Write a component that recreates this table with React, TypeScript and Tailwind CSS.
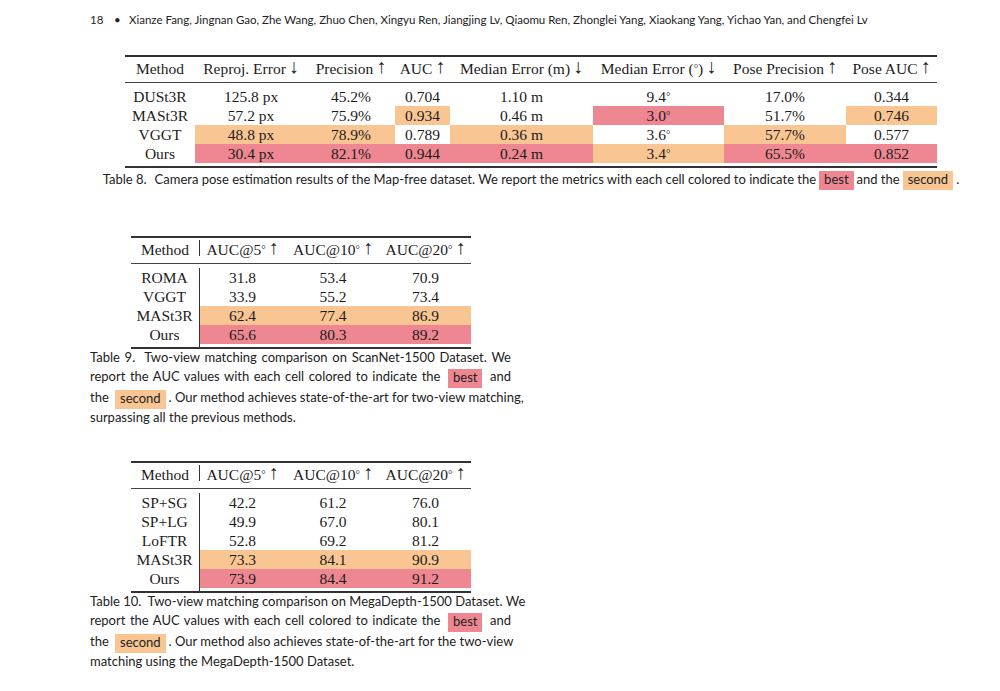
import React from 'react';

const SERIF = "font-['Liberation_Serif',serif]";
const SANS = "font-['Lato',sans-serif]";

type Shade = 'best' | 'second' | undefined;

const shadeClass = (s: Shade) =>
    s === 'best' ? 'bg-[#ee8791]' : s === 'second' ? 'bg-[#f9c592]' : '';

const Up = () => <span className="text-[20px] leading-none ml-[3px] relative top-[-1px]">↑</span>;
const Down = () => <span className="text-[20px] leading-none ml-[3px] relative top-[-1px]">↓</span>;
const Deg = () => <span className="text-[11px] leading-none relative top-[-2px]">°</span>;

const poseCols = '70px 112px 88px 55px 143px 131px 122px 91px';
const poseHeader: React.ReactNode[] = [
    'Method',
    <>Reproj. Error<Down /></>,
    <>Precision<Up /></>,
    <>AUC<Up /></>,
    <>Median Error (m)<Down /></>,
    <>Median Error (<Deg />)<Down /></>,
    <>Pose Precision<Up /></>,
    <>Pose AUC<Up /></>,
];

const d = (v: string) => <>{v}<Deg /></>;

const poseRows: { name: string; vals: React.ReactNode[]; shades: Shade[] }[] = [
    { name: 'DUSt3R', vals: ['125.8 px', '45.2%', '0.704', '1.10 m', d('9.4'), '17.0%', '0.344'], shades: [] },
    { name: 'MASt3R', vals: ['57.2 px', '75.9%', '0.934', '0.46 m', d('3.0'), '51.7%', '0.746'], shades: [undefined, undefined, 'second', undefined, 'best', undefined, 'second'] },
    { name: 'VGGT', vals: ['48.8 px', '78.9%', '0.789', '0.36 m', d('3.6'), '57.7%', '0.577'], shades: ['second', 'second', undefined, 'second', undefined, 'second', undefined] },
    { name: 'Ours', vals: ['30.4 px', '82.1%', '0.944', '0.24 m', d('3.4'), '65.5%', '0.852'], shades: ['best', 'best', 'best', 'best', 'second', 'best', 'best'] },
];

const Box = ({ kind, children }: { kind: Shade; children: React.ReactNode }) => (
    <span className={`${shadeClass(kind)} inline-flex items-center h-[19px] px-[5px] mx-[3px] align-middle`}>{children}</span>
);

// one data cell, fixed 19px band
const cell = 'h-[19px] leading-[19px] text-center whitespace-nowrap';

const PoseTable = () => (
    <div className={`w-[812px] ${SERIF} text-[15.5px] text-[#1c1c1c]`}>
        <div className="h-[2px] bg-[#333]" />
        <div className="grid h-[25px] items-center" style={{ gridTemplateColumns: poseCols }}>
            {poseHeader.map((h, i) => (
                <div key={i} className="text-center whitespace-nowrap pb-[2px]">{h}</div>
            ))}
        </div>
        <div className="h-px bg-[#444]" />
        <div className="h-[4px]" />
        {poseRows.map((r) => (
            <div key={r.name} className="grid grid-rows-[19px] h-[19px]" style={{ gridTemplateColumns: poseCols }}>
                <div className={cell}>{r.name}</div>
                {r.vals.map((v, i) => (
                    <div key={i} className={`${cell} ${shadeClass(r.shades[i])}`}>{v}</div>
                ))}
            </div>
        ))}
        <div className="h-[3px]" />
        <div className="h-[2px] bg-[#333]" />
    </div>
);

const aucCols = '69px 86px 95px 90px';

const AucTable = ({ rows }: { rows: { name: string; vals: string[]; shade?: Shade }[] }) => (
    <div className={`w-[340px] ${SERIF} text-[15.5px] text-[#1c1c1c]`}>
        <div className="h-[2px] bg-[#333]" />
        <div className="grid h-[25px] items-center" style={{ gridTemplateColumns: aucCols }}>
            <div className="relative text-center pb-[2px]">
                Method
                <span className="absolute right-0 top-[2px] h-[16px] w-px bg-[#333]" />
            </div>
            <div className="text-center whitespace-nowrap pb-[2px]">AUC@5<Deg /><Up /></div>
            <div className="text-center whitespace-nowrap pb-[2px]">AUC@10<Deg /><Up /></div>
            <div className="text-center whitespace-nowrap pb-[2px]">AUC@20<Deg /><Up /></div>
        </div>
        <div className="h-px bg-[#444]" />
        <div className="h-[4px]" />
        {rows.map((r) => (
            <div key={r.name} className="grid grid-rows-[19px] h-[19px]" style={{ gridTemplateColumns: aucCols }}>
                <div className={`${cell} border-r border-[#333]`}>{r.name}</div>
                {r.vals.map((v, i) => (
                    <div key={i} className={`${cell} ${shadeClass(r.shade)}`}>{v}</div>
                ))}
            </div>
        ))}
        <div className="grid h-[3px]" style={{ gridTemplateColumns: aucCols }}>
            <div className="border-r border-[#333]" />
        </div>
        <div className="h-[2px] bg-[#333]" />
    </div>
);

const Line = ({ h, last, children }: { h: string; last?: boolean; children: React.ReactNode }) => (
    <div className={`${h} flex items-center`}>
        <div className={`w-full whitespace-nowrap ${last ? 'text-left' : 'text-justify [text-align-last:justify]'}`}>{children}</div>
    </div>
);

export default function App() {
    return (
        <div className={`w-[1000px] h-[691px] bg-white pl-[90px] ${SANS} text-[#222]`}>
            {/* running head */}
            <div className="h-[40px] flex items-center text-[11.5px] text-[#222]">
                <span className="w-[24px]">18</span>
                <span className="w-[15px]">•</span>
                <span>Xianze Fang, Jingnan Gao, Zhe Wang, Zhuo Chen, Xingyu Ren, Jiangjing Lv, Qiaomu Ren, Zhonglei Yang, Xiaokang Yang, Yichao Yan, and Chengfei Lv</span>
            </div>

            {/* Table 8 */}
            <div className="w-[882px] mt-[15px] flex flex-col items-center">
                <PoseTable />
                <div className="h-[22px] mt-[1px] flex items-center text-[13px] whitespace-nowrap">
                    <span>Table 8.</span>
                    <span className="ml-[8px]">Camera pose estimation results of the Map-free dataset. We report the metrics with each cell colored to indicate the</span>
                    <Box kind="best">best</Box>
                    <span>and the</span>
                    <Box kind="second">second</Box>
                    <span>.</span>
                </div>
            </div>

            {/* Table 9 */}
            <div className="w-[421px] mt-[45px]">
                <div className="flex justify-center">
                    <AucTable
                        rows={[
                            { name: 'ROMA', vals: ['31.8', '53.4', '70.9'] },
                            { name: 'VGGT', vals: ['33.9', '55.2', '73.4'] },
                            { name: 'MASt3R', vals: ['62.4', '77.4', '86.9'], shade: 'second' },
                            { name: 'Ours', vals: ['65.6', '80.3', '89.2'], shade: 'best' },
                        ]}
                    />
                </div>
                <div className="text-[13px]">
                    <Line h="h-[18px]">Table 9.&nbsp; Two-view matching comparison on ScanNet-1500 Dataset. We</Line>
                    <Line h="h-[21px]">report the AUC values with each cell colored to indicate the <Box kind="best">best</Box> and</Line>
                    <Line h="h-[21px]">the <Box kind="second">second</Box>. Our method achieves state-of-the-art for two-view matching,</Line>
                    <Line h="h-[18px]" last>surpassing all the previous methods.</Line>
                </div>
            </div>

            {/* Table 10 */}
            <div className="w-[421px] mt-[34px]">
                <div className="flex justify-center">
                    <AucTable
                        rows={[
                            { name: 'SP+SG', vals: ['42.2', '61.2', '76.0'] },
                            { name: 'SP+LG', vals: ['49.9', '67.0', '80.1'] },
                            { name: 'LoFTR', vals: ['52.8', '69.2', '81.2'] },
                            { name: 'MASt3R', vals: ['73.3', '84.1', '90.9'], shade: 'second' },
                            { name: 'Ours', vals: ['73.9', '84.4', '91.2'], shade: 'best' },
                        ]}
                    />
                </div>
                <div className="text-[13px]">
                    <Line h="h-[18px]">Table 10.&nbsp; Two-view matching comparison on MegaDepth-1500 Dataset. We</Line>
                    <Line h="h-[21px]">report the AUC values with each cell colored to indicate the <Box kind="best">best</Box> and</Line>
                    <Line h="h-[21px]">the <Box kind="second">second</Box>. Our method also achieves state-of-the-art for the two-view</Line>
                    <Line h="h-[18px]" last>matching using the MegaDepth-1500 Dataset.</Line>
                </div>
            </div>
        </div>
    );
}
